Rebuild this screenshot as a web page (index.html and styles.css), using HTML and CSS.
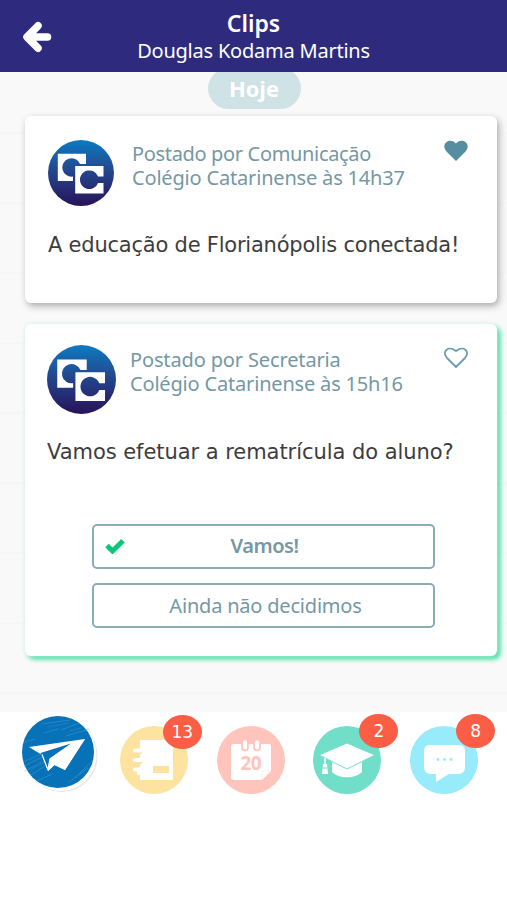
FILE: index.html
```html
<!DOCTYPE html>
<html lang="pt-BR">
<head>
<meta charset="utf-8">
<title>Clips</title>
<link rel="stylesheet" href="styles.css">
</head>
<body>
<svg class="defs" width="0" height="0" aria-hidden="true">
  <defs>
    <linearGradient id="crest" gradientUnits="userSpaceOnUse" x1="0" y1="0" x2="0" y2="66"><stop offset="0" stop-color="#0c7bc0"/><stop offset=".45" stop-color="#23488f"/><stop offset="1" stop-color="#281259"/></linearGradient>
    <symbol id="logo" viewBox="0 0 66 66">
      <circle cx="33" cy="33" r="33" fill="url(#crest)"/>
      <path d="M9.800 13.800H38V24H32A9.200 9.200 0 1 0 25 36.500V41H9.800Z" fill="#fff"/>
      <path d="M27.200 26H55.500V36.500H50A9.300 9.300 0 1 0 50 43H55.500V53.500H27.200Z" fill="#fff"/>
    </symbol>
  </defs>
</svg>
<header class="topbar">
  <svg class="back" viewBox="0 0 30 32"><path d="M16 4.800L5 16L16 27.200M6 16H25.500" fill="none" stroke="#fff" stroke-width="7.500" stroke-linecap="round" stroke-linejoin="round"/></svg>
  <div class="heading">
    <h1>Clips</h1>
    <p>Douglas Kodama Martins</p>
  </div>
</header>
<main class="feed">
  <div class="day">Hoje</div>
  <article class="card first">
    <div class="post">
      <svg class="avatar"><use href="#logo"/></svg>
      <div class="author"><p class="who-a">Postado por Comunicação</p><p class="when">Colégio Catarinense às 14h37</p></div>
      <svg class="heart" viewBox="0 0 24 22"><path d="M12 21L2.700 11.700C-4 4.800 5-3.500 12 3.400C19-3.500 28 4.800 21.300 11.700Z" fill="#568da1"/></svg>
    </div>
    <p class="message message-a">A educação de Florianópolis conectada!</p>
  </article>
  <article class="card second">
    <div class="post">
      <svg class="avatar"><use href="#logo"/></svg>
      <div class="author"><p class="who-b">Postado por Secretaria</p><p class="when">Colégio Catarinense às 15h16</p></div>
      <svg class="heart" viewBox="0 0 24 22"><path d="M12 20L3 11C-3 4.600 5-2.200 12 4.200C19-2.200 27 4.600 21 11Z" fill="none" stroke="#6d9cac" stroke-width="1.800" stroke-linejoin="round"/></svg>
    </div>
    <p class="message message-b">Vamos efetuar a rematrícula do aluno?</p>
    <div class="options">
      <button class="option chosen"><svg class="check" viewBox="0 0 20 16"><path d="M2 7.500L7.500 13L18 2.700" fill="none" stroke="#0bc878" stroke-width="5"/></svg><span>Vamos!</span></button>
      <button class="option"><span>Ainda não decidimos</span></button>
    </div>
  </article>
</main>
<nav class="tabs">
  <a class="tab active"><svg viewBox="0 0 76 78">
    <circle cx="39.500" cy="41" r="36" fill="#e4e6e8"/><circle cx="38.500" cy="40" r="36" fill="#fff"/><circle cx="36" cy="37" r="36" fill="#0872b9"/>
    <g fill="none" stroke="#4f9fd0" stroke-width=".9" stroke-linecap="round" opacity=".5"><path d="M20 9L48 5M39 15L57 8M44 21L67 14M22 18L36 14M3 51L20 42M3 56L22 46M9 60L23 51M15 66L30 59M46 68L66 53M53 63L68 48M3 27L13 24"/><path d="M26 12L46 8M3 46L18 40M10 54L22 48M48 16L62 12" stroke-width=".7"/></g>
    <path d="M7 32L63 24L43 55L32.500 50L26 56L20 40Z" fill="#fff"/><path d="M18.500 38L49 28.500L27.500 43.500L25.500 53.500Z" fill="#0872b9"/><path d="M63 24L27.500 44L26 56L32.500 50L43 55Z" fill="#fff"/><path d="M20 39.500L26 55" stroke="#fff" stroke-width="1.200"/>
  </svg></a>
  <a class="tab"><svg viewBox="0 0 68 68"><circle cx="34" cy="34" r="34" fill="#fde39f"/>
    <path d="M20 14H53V54H20V49H17V45H20V39L23 36L20 33V29L23 26L20 23Z" fill="#fff"/><path d="M15 24.500H22M15 34H22M15 43.500H22" stroke="#fff" stroke-width="4" stroke-linecap="round"/><rect x="33" y="40" width="16" height="7" fill="#fde39f"/></svg><span class="badge">13</span></a>
  <a class="tab"><svg viewBox="0 0 68 68"><circle cx="34" cy="34" r="34" fill="#ffc4bb"/>
    <path d="M17 18H52Q54 18 54 20V45L45 54H17Q14 54 14 51V21Q14 18 17 18Z" fill="#fff"/><path d="M54 45H47Q45 45 45 47V54Z" fill="#fff" stroke="#ffe1dc" stroke-width=".6"/>
    <g fill="#fff" stroke="#ffc4bb" stroke-width="1.700"><rect x="25" y="13.500" width="6" height="11" rx="3"/><rect x="37" y="13.500" width="6" height="11" rx="3"/></g>
    <text x="34" y="44" text-anchor="middle" textLength="21" class="date">20</text></svg></a>
  <a class="tab"><svg viewBox="0 0 68 68"><circle cx="34" cy="34" r="34" fill="#70dec8"/>
    <path d="M19 33H49V46C42 53 26 53 19 46Z" fill="#fff"/><path d="M6 29L34 17L62 29L34 43Z" fill="#fff" stroke="#70dec8" stroke-width="1"/><path d="M12 32V40" stroke="#fff" stroke-width="1.500"/><path d="M10 38H14L15 48H9Z" fill="#fff"/><path d="M9.500 42H14.500" stroke="#70dec8"/></svg><span class="badge single">2</span></a>
  <a class="tab"><svg viewBox="0 0 68 68"><circle cx="34" cy="34" r="34" fill="#98ebfa"/>
    <path d="M19 19H49Q55 19 55 25V41Q55 48 48 48H39L26 56V48H20Q14 47 14 41V25Q14 19 19 19Z" fill="#fff"/><g fill="#98ebfa"><circle cx="28" cy="33.500" r="1.400"/><circle cx="34.500" cy="33.500" r="1.400"/><circle cx="41" cy="33.500" r="1.400"/></g></svg><span class="badge single">8</span></a>
</nav>
</body>
</html>
```
FILE: styles.css
```css
* { box-sizing: border-box; }
body { margin: 0; width: 507px; height: 900px; overflow: hidden; background: #fff; font-family: "Noto Sans", "Open Sans", sans-serif; }
h1, p { margin: 0; white-space: nowrap; }
svg { display: block; }
.defs { position: absolute; }
.topbar { position: relative; z-index: 1; height: 72px; padding: 10px 22px 0; background: #2e2b7f; color: #fff; display: grid; grid-template-columns: 30px 1fr 30px; }
.back { width: 30px; height: 32px; margin-top: 11px; }
.heading { text-align: center; }
h1 { font-size: 23px; line-height: 27px; font-weight: 600; letter-spacing: 0; }
.heading p { font-size: 20px; line-height: 27px; letter-spacing: -.22px; }
.feed { height: 640px; padding: 0 10px 0 25px; display: flow-root; background: repeating-linear-gradient(#f9f9f9 0 60px, #f5f5f5 61px, #f9f9f9 63px 70px); }
.day { width: 93px; height: 41px; margin: -4px auto 7px; transform: translateX(-7px); border-radius: 21px; background: #cfe2e6; color: #fff; text-align: center; font: 700 22px/41px "Open Sans", sans-serif; }
.card { background: #fff; border-radius: 6px; padding: 24px 29px 0 23px; }
.first { height: 187px; margin-bottom: 21px; box-shadow: 2px 3px 7px #aaa; }
.second { height: 332px; padding-top: 21px; box-shadow: 0 0 4px #d5f5e8, 3px 3px 5px #1fd893; }
.post { display: flex; height: 68px; }
.avatar { width: 66px; height: 66px; flex: none; }
.second .avatar { width: 69px; height: 69px; margin-left: -1px; }
.author { margin-left: 18px; padding-top: 2px; flex: 1; color: #7498a4; font-size: 20px; line-height: 24px; }
.second .author { margin-left: 14px; padding-top: 3px; }
.who-a { letter-spacing: -.34px; }
.who-b { letter-spacing: -.14px; }
.when { letter-spacing: -.18px; }
.heart { width: 24px; height: 22px; flex: none; }
.second .heart { margin-top: 2px; }
.message { font: 21px/28px "DejaVu Sans", sans-serif; color: #3d3d3d; margin-top: 23px; }
.message-a { letter-spacing: -.22px; }
.second .message { margin: 25px 0 0 -1px; letter-spacing: -.05px; }
.options { display: grid; gap: 14px; width: 343px; margin: 58px 0 0 44px; }
.option { height: 45px; padding: 0; display: grid; grid-template-columns: 48px 1fr 44px; align-items: center; background: #fff; border: 2px solid #89acb8; border-radius: 5px; color: #7498a4; font: 20px/27px "Noto Sans", sans-serif; letter-spacing: -.2px; }
.option span { grid-column: 2; text-align: center; white-space: nowrap; }
.option.chosen { font-weight: 600; letter-spacing: -.5px; padding: 0 2px 2px 0; }
.check { width: 20px; height: 16px; margin-left: 11px; }
.tabs { height: 100px; display: grid; grid-template-columns: repeat(5, 96.8px); padding: 14px 0 0 9px; }
.tab { position: relative; }
.tab svg { width: 68px; height: 68px; margin-left: 14px; }
.tab.active svg { width: 76px; height: 78px; margin: -11px 0 0 13px; }
.badge { position: absolute; left: 57px; top: -11px; width: 39px; height: 34px; border-radius: 50%; background: #fc5d45; color: #fff; font: 17px/35px "DejaVu Sans", sans-serif; text-align: center; }
.badge.single { left: 60px; top: -12px; }
.date { font: 700 19px "Noto Sans", sans-serif; fill: #ffc4bb; }
```
